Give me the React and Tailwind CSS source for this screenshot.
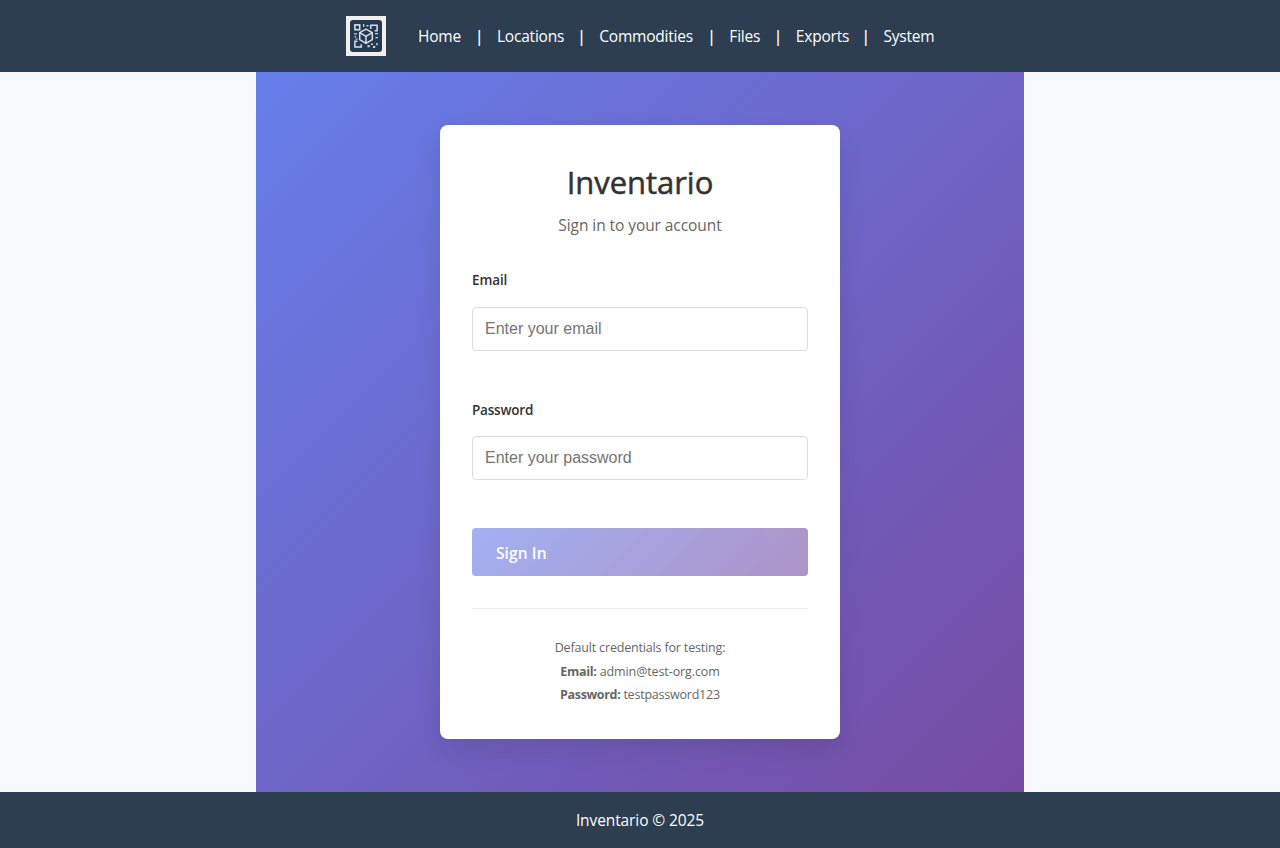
const NAV = [
  { label: 'Home', w: 'w-[43.3px]' },
  { label: 'Locations', w: 'w-[66.6px]' },
  { label: 'Commodities', w: 'w-[94.4px]' },
  { label: 'Files', w: 'w-[30.8px]' },
  { label: 'Exports', w: 'w-[52px]' },
  { label: 'System', w: 'w-[51px]' },
];

function Logo() {
  return (
    <svg className="mr-8 size-10 shrink-0" viewBox="0 0 40 40" fill="none">
      <rect width="40" height="40" fill="#f1eeec" />
      <rect x="4" y="4" width="32" height="32" rx="3" fill="#233a52" />
      <g stroke="#dcdfe1">
        <rect x="8.9" y="8.9" width="4.8" height="4.8" strokeWidth="1.6" />
        <path d="M24.8 13V9.2h6.3v5.6h-2.4M11.4 25.2H8.9v5.9h6.4v-2.8" strokeWidth="1.5" />
        <path d="M20 13.2l6.3 3.5v7L20 27.4l-6.3-3.7v-7zM13.7 16.7l6.3 3.6 6.3-3.6M20 20.3v7" strokeLinejoin="round" strokeWidth="1.5" />
      </g>
      <path d="M17 8h1.3v3H17zM20.5 9h2v1.4h-2zM8 17.3h3v1.2H8zM8.5 20h1.5v1.5H8.5zM9.5 22.5h2v1.2h-2zM29 17h3v1.3h-3zM29.5 21h2.5v1.3h-2.5zM21.5 29h2.2v2.2h-2.2zM25 27.5h2v1.4h-2zM27 30h2.2v2H27zM30.2 27h1.5v2.2h-1.5z" fill="#c9d1d8" />
    </svg>
  );
}

function Field({ label, type, placeholder, className, labelClass }) {
  return (
    <div className={className}>
      <label className={`${labelClass} block h-[22px] whitespace-nowrap text-[13.5px] leading-[22px] font-semibold text-[#333]`}>{label}</label>
      <input
        type={type}
        placeholder={placeholder}
        className="block h-[44px] w-full rounded border border-[#ddd] bg-white px-3 font-['Liberation_Sans',sans-serif] text-[16px] tracking-normal outline-none placeholder:text-[#757575]"
      />
    </div>
  );
}

export default function App() {
  return (
    <div className="flex h-[848px] flex-col bg-[#f8f9fb] font-['Open_Sans','Noto_Sans',sans-serif] text-[15.5px] text-[#2c3e50]">
      <header className="flex h-[72px] shrink-0 items-center bg-[#2c3e50] pl-[346px]">
        <Logo />
        <nav className="flex items-center pt-[2px] text-white">
          {NAV.map((n, i) => (
            <div key={n.label} className="flex items-center">
              {i > 0 && <span className="w-[35.7px] text-center font-semibold">|</span>}
              <a className={`${n.w} whitespace-nowrap tracking-[-0.21px]`}>{n.label}</a>
            </div>
          ))}
        </nav>
      </header>

      <main className="mx-auto flex h-[720px] w-[768px] shrink-0 items-center justify-center bg-[linear-gradient(135deg,#667eea_0%,#764ba2_100%)]">
        <section className="h-[614px] w-[400px] rounded-lg bg-white px-8 pt-8 shadow-[0_10px_25px_rgba(0,0,0,0.1)]">
          <div className="text-center">
            <h1 className="h-[51px] text-[31px] leading-[51px] font-medium tracking-[-0.05px] text-[#333] [-webkit-text-stroke:0.5px_#333]">Inventario</h1>
            <p className="mt-1 h-[26px] leading-[26px] tracking-[-0.07px] text-[#666]">Sign in to your account</p>
          </div>
          <form className="mt-[31px]">
            <Field label="Email" type="email" placeholder="Enter your email" labelClass="mb-[16px] tracking-[-0.1px]" />
            <Field label="Password" type="password" placeholder="Enter your password" labelClass="mb-[15px] tracking-[-0.2px]" className="mt-[48px]" />
            <button type="button" className="mt-12 flex h-12 w-full items-center rounded bg-[linear-gradient(135deg,#667eea_0%,#764ba2_100%)] px-6 pt-[3px] font-semibold tracking-[0.1px] text-white opacity-60">Sign In</button>
          </form>
          <div className="mt-8 border-t border-[#eee] pt-[27px] text-center text-[12.5px] leading-[23.4px] tracking-[-0.17px] text-[#666]">
            <p>Default credentials for testing:</p>
            <p className="pt-[1.4px] leading-[22px] tracking-[-0.1px]"><strong className="tracking-[-0.3px]">Email:</strong> admin@test-org.com</p>
            <p className="tracking-[-0.22px]"><strong className="tracking-[-0.35px]">Password:</strong> testpassword123</p>
          </div>
        </section>
      </main>

      <footer className="flex h-14 shrink-0 items-center justify-center bg-[#2c3e50] pt-[2px] tracking-[-0.1px] text-white">Inventario © 2025</footer>
    </div>
  );
}
